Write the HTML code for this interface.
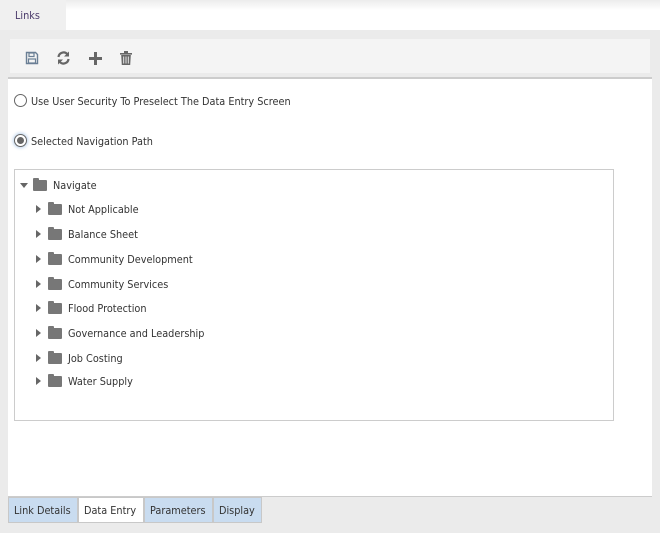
<!DOCTYPE html>
<html><head><meta charset="utf-8"><style>
*{margin:0;padding:0;box-sizing:border-box}
body{width:660px;height:533px;position:relative;background:#ebebeb;font-family:"DejaVu Sans Condensed","Liberation Sans",sans-serif;font-size:10.8px;color:#333;overflow:hidden}
.top{position:absolute;left:0;top:0;width:660px;height:30px;background:linear-gradient(#ececec,#fff 10px,#fff)}
.ltab{position:absolute;left:0;top:0;width:66px;height:30px;background:#f0f0f0;color:#4a3a6a;padding:9px 0 0 15px}
.tb{position:absolute;left:10px;top:39px;width:640px;height:34px;background:#f4f4f4}
.panel{position:absolute;left:8px;top:77px;width:644px;height:420px;background:#fff;border-top:2px solid #ccc;border-bottom:1px solid #ccc}
.lbl{position:absolute;color:#333}
.radio{position:absolute;width:13px;height:13px;border:1px solid #666;border-radius:50%;background:#fff}
.tree{position:absolute;left:14px;top:169px;width:600px;height:252px;border:1px solid #ccc;background:#fff}
.row{position:absolute;height:16px;display:flex;align-items:center}
.fold{width:14px;height:11px;background:#777;border-radius:1px;position:relative;margin-right:6px}
.fold:before{content:"";position:absolute;left:0;top:-2px;width:6px;height:3px;background:#777;border-radius:1px 1px 0 0}
.tri{width:0;height:0;border-top:4px solid transparent;border-bottom:4px solid transparent;border-left:5px solid #666;margin-right:7px}
.tab{position:absolute;top:497px;height:26px;background:#c9dcf0;border:1px solid #c8c8c8;padding:6px 0 0 5px;color:#333}
</style></head><body>
<div class="top"></div>
<div class="ltab">Links</div>
<div class="tb">
<svg style="position:absolute;left:15px;top:12px" width="14" height="14" viewBox="0 0 14 14"><path d="M1.5 1.5h9l2 2v9h-11z" fill="none" stroke="#6a7f95" stroke-width="1.4"/><rect x="4" y="2" width="5" height="3.5" fill="none" stroke="#6a7f95" stroke-width="1.2"/><rect x="3.5" y="8" width="7" height="4" fill="none" stroke="#6a7f95" stroke-width="1.2"/></svg>
<svg style="position:absolute;left:46px;top:12px" width="15" height="14" viewBox="0 0 15 14"><path d="M2.5 6A5 5 0 0 1 11.5 3.5M12.5 8A5 5 0 0 1 3.5 10.5" fill="none" stroke="#666" stroke-width="2.2"/><path d="M13 0.5v5h-5z M2 13.5v-5h5z" fill="#666"/></svg>
<svg style="position:absolute;left:79px;top:13px" width="13" height="13" viewBox="0 0 13 13"><path d="M5 0h3v5h5v3H8v5H5V8H0V5h5z" fill="#666"/></svg>
<svg style="position:absolute;left:110px;top:12px" width="12" height="14" viewBox="0 0 12 14"><path d="M0 2h12v1.6H0zM4 0h4v2H4z" fill="#666"/><path d="M1.2 4h9.6l-.6 10H1.8z" fill="#666"/><path d="M3.7 5.5v7M6 5.5v7M8.3 5.5v7" stroke="#f4f4f4" stroke-width=".9"/></svg>
</div>
<div class="panel"></div>
<div class="radio" style="left:14px;top:94px"></div>
<div class="lbl" style="left:31px;top:95px">Use User Security To Preselect The Data Entry Screen</div>
<div class="radio" style="left:14px;top:134px;box-shadow:0 0 3px 1px #bcd3ec"><div style="position:absolute;left:2px;top:2px;width:7px;height:7px;border-radius:50%;background:#666"></div></div>
<div class="lbl" style="left:31px;top:135px">Selected Navigation Path</div>
<div class="tree">
<div class="row" style="left:5px;top:7px"><div style="width:0;height:0;border-left:4.5px solid transparent;border-right:4.5px solid transparent;border-top:5px solid #666;margin-right:5px"></div><div class="fold"></div>Navigate</div>
<div class="row" style="left:21px;top:31px"><div class="tri"></div><div class="fold"></div>Not Applicable</div>
<div class="row" style="left:21px;top:56px"><div class="tri"></div><div class="fold"></div>Balance Sheet</div>
<div class="row" style="left:21px;top:81px"><div class="tri"></div><div class="fold"></div>Community Development</div>
<div class="row" style="left:21px;top:106px"><div class="tri"></div><div class="fold"></div>Community Services</div>
<div class="row" style="left:21px;top:130px"><div class="tri"></div><div class="fold"></div>Flood Protection</div>
<div class="row" style="left:21px;top:155px"><div class="tri"></div><div class="fold"></div>Governance and Leadership</div>
<div class="row" style="left:21px;top:180px"><div class="tri"></div><div class="fold"></div>Job Costing</div>
<div class="row" style="left:21px;top:203px"><div class="tri"></div><div class="fold"></div>Water Supply</div>
</div>
<div class="tab" style="left:8px;width:70px">Link Details</div>
<div class="tab" style="left:78px;width:66px;background:#fff">Data Entry</div>
<div class="tab" style="left:144px;width:69px">Parameters</div>
<div class="tab" style="left:213px;width:49px">Display</div>
</body></html>
